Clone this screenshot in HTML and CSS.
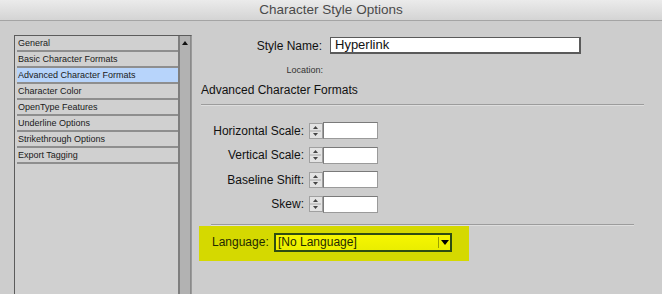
FILE: index.html
```html
<!DOCTYPE html>
<html lang="en">
<head>
    <meta charset="UTF-8">
    <title>Character Style Options</title>
    <link rel="stylesheet" href="styles.css">
</head>
<body>
    <div class="titlebar">Character Style Options</div>

    <div class="main">
        <div class="listbox">
            <ul class="items">
                <li>General</li>
                <li>Basic Character Formats</li>
                <li class="selected">Advanced Character Formats</li>
                <li>Character Color</li>
                <li>OpenType Features</li>
                <li>Underline Options</li>
                <li>Strikethrough Options</li>
                <li>Export Tagging</li>
            </ul>
            <div class="scrollbar">
                <svg class="scroll-up" width="10" height="8" viewBox="0 0 10 8">
                    <polygon points="2,6 8,6 5,2" fill="#111"/>
                </svg>
            </div>
        </div>

        <div class="panel">
            <div class="name-row">
                <label class="name-label">Style Name:</label>
                <div class="name-input">Hyperlink</div>
            </div>
            <div class="location">Location:</div>
            <h2 class="section-title">Advanced Character Formats</h2>
            <div class="rule"></div>

            <div class="fields">
                <label>Horizontal Scale:</label>
                <span class="spinner"><svg width="13" height="16" viewBox="0 0 13 16"><polygon points="4,6 9,6 6.5,3" fill="#444"/><line x1="1" y1="8" x2="12" y2="8" stroke="#a8a8a8"/><polygon points="4,10 9,10 6.5,13" fill="#444"/></svg></span>
                <span class="field"></span>

                <label>Vertical Scale:</label>
                <span class="spinner"><svg width="13" height="16" viewBox="0 0 13 16"><polygon points="4,6 9,6 6.5,3" fill="#444"/><line x1="1" y1="8" x2="12" y2="8" stroke="#a8a8a8"/><polygon points="4,10 9,10 6.5,13" fill="#444"/></svg></span>
                <span class="field"></span>

                <label>Baseline Shift:</label>
                <span class="spinner"><svg width="13" height="16" viewBox="0 0 13 16"><polygon points="4,6 9,6 6.5,3" fill="#444"/><line x1="1" y1="8" x2="12" y2="8" stroke="#a8a8a8"/><polygon points="4,10 9,10 6.5,13" fill="#444"/></svg></span>
                <span class="field"></span>

                <label>Skew:</label>
                <span class="spinner"><svg width="13" height="16" viewBox="0 0 13 16"><polygon points="4,6 9,6 6.5,3" fill="#444"/><line x1="1" y1="8" x2="12" y2="8" stroke="#a8a8a8"/><polygon points="4,10 9,10 6.5,13" fill="#444"/></svg></span>
                <span class="field"></span>
            </div>

            <div class="rule inset"></div>

            <div class="highlight">
                <label class="lang-label">Language:</label>
                <div class="select">
                    <span class="select-value">[No Language]</span>
                    <span class="select-arrow">
                        <svg width="8" height="6" viewBox="0 0 8 6"><polygon points="0,1 8,1 4,6" fill="#000"/></svg>
                    </span>
                </div>
            </div>
        </div>
    </div>
</body>
</html>
```

FILE: styles.css
```css
html, body {
    margin: 0;
    padding: 0;
}
body {
    width: 662px;
    height: 294px;
    overflow: hidden;
    background-color: #cdcdcd;
    font-family: "Liberation Sans", Arial, sans-serif;
    color: #111;
}
.titlebar {
    height: 20px;
    line-height: 20px;
    text-align: center;
    font-size: 13.5px;
    color: #4a4a4a;
    background: linear-gradient(#ebebeb, #d4d4d4);
    border-bottom: 1px solid #a4a4a4;
}
.main {
    display: flex;
    padding-top: 14px;
}

/* left list */
.listbox {
    display: flex;
    margin-left: 14px;
    height: 259px;
    border: 1px solid #5c5c5c;
    border-right-color: #9a9a9a;
    border-bottom: none;
}
.items {
    list-style: none;
    margin: 0;
    padding: 0 0 0 2px;
    width: 161px;
    background-color: #d0d0d0;
}
.items li {
    box-sizing: border-box;
    height: 16px;
    line-height: 14px;
    padding-left: 1px;
    font-size: 9px;
    color: #1a1a1a;
    border-bottom: 2px solid #8e8e8e;
}
.items li.selected {
    background-color: #b7d4fb;
}
.scrollbar {
    width: 10px;
    background-color: #b2b2b2;
    border-left: 2px solid #7e7e7e;
    border-right: 1px solid #8a8a8a;
}
.scroll-up {
    display: block;
    margin-top: 3px;
}

/* right panel */
.panel {
    margin-left: 9px;
    padding-top: 2px;
    width: 443px;
}
.name-row {
    display: flex;
    align-items: center;
    gap: 8px;
}
.name-label {
    width: 121px;
    text-align: right;
    font-size: 12px;
}
.name-input {
    box-sizing: border-box;
    width: 251px;
    height: 17px;
    line-height: 14px;
    padding-left: 4px;
    font-size: 13px;
    background-color: #fff;
    border: 1px solid #5a5a5a;
    border-width: 1px 2px 2px 1px;
}
.location {
    width: 122px;
    margin-top: 10px;
    text-align: right;
    font-size: 9px;
    line-height: 12px;
    color: #333;
}
.section-title {
    margin: 7px 0 0;
    font-size: 12px;
    font-weight: normal;
    line-height: 14px;
}
.rule {
    margin-top: 7px;
    border-top: 1px solid #9c9c9c;
    border-bottom: 1px solid #dedede;
}
.rule.inset {
    margin: 11px 10px 0;
}
.fields {
    display: grid;
    grid-template-columns: 108px 14px 55px;
    grid-auto-rows: 17px;
    row-gap: 7.67px;
    margin-top: 16px;
    align-items: center;
}
.fields label {
    padding-right: 5px;
    text-align: right;
    font-size: 12px;
}
.spinner {
    box-sizing: border-box;
    display: block;
    width: 14px;
    height: 16px;
    background-color: #e3e3e3;
    border: 1px solid #a0a0a0;
}
.spinner svg {
    display: block;
    margin: -1px 0 0 -1px;
}
.field {
    box-sizing: border-box;
    display: block;
    height: 17px;
    width: 55px;
    background-color: #fff;
    border: 1px solid #7a7a7a;
    border-right-color: #9a9a9a;
    border-bottom-color: #9a9a9a;
}

/* highlighted language row */
.highlight {
    display: flex;
    align-items: center;
    width: 270px;
    height: 35px;
    margin-left: -2px;
    padding-bottom: 2px;
    box-sizing: border-box;
    background-color: #d5d900;
}
.lang-label {
    margin-left: 13px;
    width: 62px;
    font-size: 12px;
    color: #1f2a00;
}
.select {
    box-sizing: border-box;
    display: flex;
    align-items: center;
    width: 178px;
    height: 19px;
    border: 2px solid #2f4c12;
    background: linear-gradient(#f6f600, #eaee00);
}
.select-value {
    flex: 1;
    padding-left: 2px;
    font-size: 12px;
    color: #1f2a00;
}
.select-arrow {
    display: flex;
    align-items: center;
    justify-content: center;
    width: 11px;
    height: 11px;
    border-left: 1px solid #9aa000;
}
```
